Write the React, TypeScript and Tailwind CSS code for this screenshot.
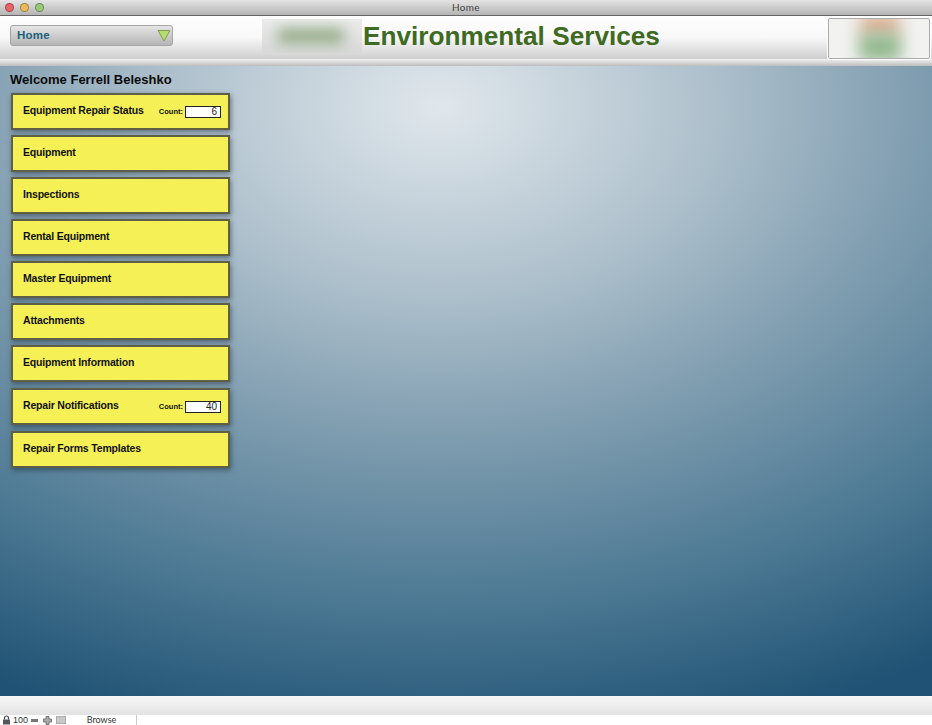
import React from "react";

const menuItems = [
  { label: "Equipment Repair Status", count: "6" },
  { label: "Equipment" },
  { label: "Inspections" },
  { label: "Rental Equipment" },
  { label: "Master Equipment" },
  { label: "Attachments" },
  { label: "Equipment Information" },
  { label: "Repair Notifications", count: "40", className: "mt-[1px]" },
  { label: "Repair Forms Templates", className: "mt-[1px]" },
];

const MenuButton: React.FC<{ label: string; count?: string; className?: string }> = ({ label, count, className }) => (
  <div
    className={`flex items-center justify-between w-[219px] h-[37px] pl-[10px] pr-[7px] bg-[#f5f056] border-2 border-[#5f5f45] shadow-[1px_2px_5px_rgba(20,35,50,0.5)] ${className ?? ""}`}
  >
    <span className="text-[10.5px] font-bold text-[#111] whitespace-nowrap tracking-[-0.18px] -mt-[1px]">{label}</span>
    {count && (
      <div className="flex items-center gap-[2px] shrink-0">
        <span className="text-[7.5px] font-bold text-[#111]">Count:</span>
        <div className="w-[36px] h-[12px] bg-white border border-[#222] text-right text-[10px] leading-[10px] pr-[3px] text-[#222]">
          {count}
        </div>
      </div>
    )}
  </div>
);

const Light: React.FC<{ className: string }> = ({ className }) => (
  <div className={`w-[9px] h-[9px] rounded-full border border-black/30 ${className}`} />
);

export default function App() {
  return (
    <div className="flex flex-col w-[932px] h-[725px] overflow-hidden bg-white font-['Liberation_Sans',Arial,sans-serif]">
      {/* window title bar */}
      <div className="relative flex items-center justify-center h-[16px] shrink-0 bg-gradient-to-b from-[#e4e4e4] to-[#b4b4b4] border-b border-[#666]">
        <div className="absolute left-[5px] top-[3px] flex gap-[6px]">
          <Light className="bg-[#e8636a]" />
          <Light className="bg-[#eab95a]" />
          <Light className="bg-[#98c878]" />
        </div>
        <span className="text-[10px] text-[#444] font-['Lato',sans-serif] tracking-[0.3px]">Home</span>
      </div>

      {/* header */}
      <div className="flex items-center h-[43px] shrink-0 bg-gradient-to-b from-white via-[#f8f8f8] to-[#cfcfcf]">
        <div className="flex items-center justify-between w-[163px] h-[21px] ml-[10px] -mt-[4px] pl-[6px] pr-[1px] shrink-0 rounded-[3px] border border-[#a5a5a5] bg-gradient-to-b from-[#e6e6e6] to-[#b5b5b5]">
          <span className="text-[11.5px] font-bold text-[#1c5f80] tracking-[0.2px]">Home</span>
          <svg width="14" height="13" viewBox="0 0 14 13">
            <path d="M1 1.5 H13 L7 12 Z" fill="#b5dc70" stroke="#7d9a50" strokeWidth="1" />
          </svg>
        </div>

        <div className="relative w-[100px] h-[34px] ml-[89px] -mt-[3px] shrink-0 overflow-hidden bg-gradient-to-b from-[#ececec] to-[#d8d8d8]">
          <div className="absolute left-[16px] top-[10px] w-[66px] h-[14px] bg-[#8fa982] blur-[7px]" />
        </div>
        <span className="text-[26.2px] leading-none font-bold text-[#3f6a22] ml-[1px] -mt-[3px] whitespace-nowrap">
          Environmental Services
        </span>

        <div className="relative w-[102px] h-[41px] ml-auto mr-[2px] mt-[1px] shrink-0 overflow-hidden rounded-[2px] border border-[#aaa] bg-[#f2f2f0] shadow-[0_0_0_1px_#fff]">
          <div className="absolute left-[32px] -top-[4px] w-[38px] h-[20px] bg-[#dcaa8c] blur-[8px]" />
          <div className="absolute left-[30px] top-[14px] w-[42px] h-[28px] bg-[#93b98f] blur-[8px]" />
        </div>
      </div>

      {/* separator strip */}
      <div className="h-[7px] shrink-0 bg-gradient-to-b from-[#f2f2f2] to-[#bdbdbd]" />

      {/* main area */}
      <div className="flex flex-col flex-1 pl-[11px] bg-[radial-gradient(ellipse_950px_650px_at_440px_40px,#e0e7ec_0%,#afc1cd_28%,#85a1b3_48%,#4f7b95_75%,#1f5274_100%)]">
        <h1 className="text-[13px] leading-[16px] font-bold text-[#0a0a0a] -ml-[1px] mt-[6px] mb-[5px]">
          Welcome Ferrell Beleshko
        </h1>
        <div className="flex flex-col gap-[5px]">
          {menuItems.map((item) => (
            <MenuButton key={item.label} {...item} />
          ))}
        </div>
      </div>

      {/* footer */}
      <div className="h-[19px] shrink-0 bg-gradient-to-b from-[#f8f8f8] to-[#e2e2e2]" />
      <div className="flex items-center h-[10px] shrink-0 bg-white overflow-hidden">
        <svg width="9" height="10" viewBox="0 0 9 10" className="ml-[2px]">
          <path d="M2.5 4.5 V3 a2 2 0 0 1 4 0 V4.5" fill="none" stroke="#444" strokeWidth="1.2" />
          <rect x="1" y="4.5" width="7" height="5" fill="#555" />
        </svg>
        <span className="text-[9px] leading-[10px] text-[#333] ml-[2px]">100</span>
        <div className="w-[7px] h-[3px] bg-[#777] ml-[3px]" />
        <svg width="9" height="9" viewBox="0 0 9 9" className="ml-[5px]">
          <path d="M3 0.5 H6 V3 H8.5 V6 H6 V8.5 H3 V6 H0.5 V3 H3 Z" fill="#aaa" stroke="#666" strokeWidth="0.8" />
        </svg>
        <div className="w-[10px] h-[8px] bg-[#c8c8c8] border border-[#aaa] ml-[4px]" />
        <div className="flex items-center justify-center w-[70px] h-full ml-[1px] border-r border-[#ccc]">
          <span className="text-[9px] leading-[10px] text-[#333] font-['Lato',sans-serif]">Browse</span>
        </div>
      </div>
    </div>
  );
}
